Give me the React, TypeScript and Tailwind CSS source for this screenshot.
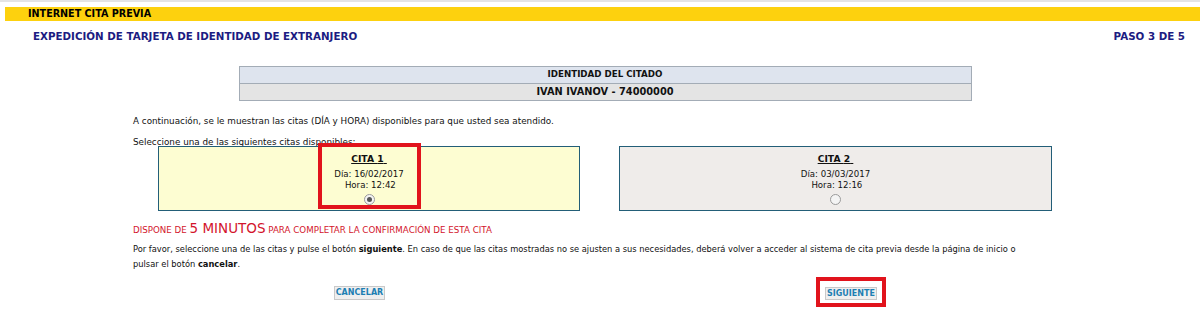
import { useState } from 'react'

const citas = [
  { id: 1, dia: '16/02/2017', hora: '12:42', bg: 'bg-[#fdfdd2]', width: 'w-[422px]' },
  { id: 2, dia: '03/03/2017', hora: '12:16', bg: 'bg-[#efecea]', width: 'w-[433px]' },
]

function Radio({ checked }: { checked: boolean }) {
  return (
    <span className="flex h-[11px] w-[11px] items-center justify-center rounded-full border border-[#9a9a9a] bg-[#f4f4f4]">
      {checked && <span className="h-[5px] w-[5px] rounded-full bg-[#555]" />}
    </span>
  )
}

export default function App() {
  const [selected] = useState(1)

  return (
    <div className="h-[312px] w-[1200px] overflow-hidden bg-white font-['DejaVu_Sans',Verdana,sans-serif] text-[8.8px] text-[#111]">
      {/* Top bars */}
      <div className="h-[2px] bg-[#e4e4e4]" />
      <div className="ml-[5px] mt-[5px] flex h-[14px] items-center bg-[#fdd10e] pl-[23px] text-[9.6px] font-bold text-black">
        INTERNET CITA PREVIA
      </div>

      <div className="mt-[9px] flex h-[14px] items-center justify-between pl-[33px] pr-[15px] text-[10.3px] font-bold text-[#1c1c82]">
        <span>EXPEDICIÓN DE TARJETA DE IDENTIDAD DE EXTRANJERO</span>
        <span>PASO 3 DE 5</span>
      </div>

      <div className="ml-[133px] w-[944px]">
        {/* Identity table */}
        <div className="mx-auto mt-[22px] w-[733px] border border-[#a3acb6] text-center font-bold">
          <div className="flex h-[17px] items-center justify-center border-b border-[#a3acb6] bg-[#dee4ee] text-[8.7px]">
            IDENTIDAD DEL CITADO
          </div>
          <div className="flex h-[16px] items-center justify-center bg-[#e4e4e4] text-[9.8px]">
            IVAN IVANOV - 74000000
          </div>
        </div>

        <p className="mt-[14px] leading-[12px]">
          A continuación, se le muestran las citas (DÍA y HORA) disponibles para que usted sea atendido.
        </p>
        <p className="mt-[9px] leading-[12px]">Seleccione una de las siguientes citas disponibles:</p>

        {/* Citas */}
        <div className="ml-[25px] -mt-[2px] flex gap-[39px]">
          {citas.map((c) => (
            <div
              key={c.id}
              className={`relative flex h-[65px] ${c.width} flex-col items-center border border-[#235e78] ${c.bg} pt-[5px]`}
            >
              <span className="text-[9.2px] font-bold underline">CITA {c.id}&nbsp;</span>
              <span className="mt-[3px] text-[8.6px] leading-[11px]">Día: {c.dia}</span>
              <span className="text-[8.6px] leading-[11px]">&nbsp;Hora: {c.hora}</span>
              <span className="mt-[3px]">
                <Radio checked={selected === c.id} />
              </span>
              {c.id === 1 && (
                <div className="absolute -top-[4px] left-[159px] h-[66px] w-[103px] border-4 border-[#e1131c]" />
              )}
            </div>
          ))}
        </div>

        {/* Warning */}
        <p className="mt-[9px] flex h-[16px] items-baseline leading-[16px] text-[#d3142c]">
          <span className="text-[8.7px]">DISPONE DE&nbsp;</span>
          <span className="text-[13.5px]">5 MINUTOS</span>
          <span className="text-[8.7px]">&nbsp;PARA COMPLETAR LA CONFIRMACIÓN DE ESTA CITA</span>
        </p>

        <p className="mt-[6px] w-[900px] text-[8.3px] leading-[15px]">
          Por favor, seleccione una de las citas y pulse el botón <b>siguiente</b>. En caso de que las citas
          mostradas no se ajusten a sus necesidades, deberá volver a acceder al sistema de cita previa desde la
          página de inicio o pulsar el botón <b>cancelar</b>.
        </p>

        {/* Buttons */}
        <div className="mt-[5px] flex items-start">
          <button className="ml-[201px] mt-[9px] h-[14px] w-[51px] border border-[#c9c9c9] bg-[#efefef] text-[8px] font-bold text-[#1d7fb3]">
            CANCELAR
          </button>
          <div className="ml-[431px] border-4 border-[#e1131c] px-[5px] pb-[3px] pt-[6px]">
            <button className="h-[13px] w-[52px] border border-[#c9c9c9] bg-[#efefef] text-[8px] font-bold text-[#1d7fb3]">
              SIGUIENTE
            </button>
          </div>
        </div>
      </div>
    </div>
  )
}
